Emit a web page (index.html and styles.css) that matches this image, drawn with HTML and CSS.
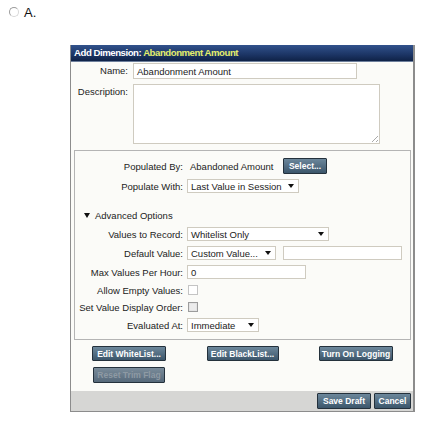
FILE: index.html
```html
<!DOCTYPE html>
<html>
<head>
    <title>Add Dimension</title>
    <link rel="stylesheet" href="styles.css">
</head>
<body>

<label class="choice">
    <span class="radio"></span>
    <span class="choice-text">A.</span>
</label>

<div class="dialog">
    <div class="title-bar">Add Dimension: <span class="title-name">Abandonment Amount</span></div>

    <div class="top-form">
        <div class="top-row">
            <span class="top-label">Name:</span>
            <span class="field name-field">Abandonment Amount</span>
        </div>
        <div class="top-row">
            <span class="top-label">Description:</span>
            <span class="field desc-field"><span class="grip"></span></span>
        </div>
    </div>

    <div class="panel">
        <div class="row row-tall">
            <span class="label">Populated By:</span>
            <span class="value">Abandoned Amount</span>
            <span class="btn btn-select">Select...</span>
        </div>
        <div class="row">
            <span class="label">Populate With:</span>
            <span class="select sel-populate">Last Value in Session <i class="caret"></i></span>
        </div>
        <div class="row advanced">
            <i class="caret caret-dark"></i>
            <span>Advanced Options</span>
        </div>
        <div class="row">
            <span class="label">Values to Record:</span>
            <span class="select sel-record">Whitelist Only <i class="caret"></i></span>
        </div>
        <div class="row">
            <span class="label">Default Value:</span>
            <span class="select sel-default">Custom Value... <i class="caret"></i></span>
            <span class="field custom-field"></span>
        </div>
        <div class="row">
            <span class="label">Max Values Per Hour:</span>
            <span class="field max-field">0</span>
        </div>
        <div class="row row-short">
            <span class="label">Allow Empty Values:</span>
            <span class="checkbox"></span>
        </div>
        <div class="row row-short">
            <span class="label">Set Value Display Order:</span>
            <span class="checkbox checkbox-dim"></span>
        </div>
        <div class="row">
            <span class="label">Evaluated At:</span>
            <span class="select sel-eval">Immediate <i class="caret"></i></span>
        </div>
    </div>

    <div class="actions">
        <span class="btn btn-wide">Edit WhiteList...</span>
        <span class="btn btn-mid">Edit BlackList...</span>
        <span class="btn btn-wide">Turn On Logging</span>
    </div>
    <div class="actions actions-left">
        <span class="btn btn-mid btn-disabled">Reset Trim Flag</span>
    </div>

    <div class="footer">
        <span class="btn btn-save">Save Draft</span>
        <span class="btn btn-cancel">Cancel</span>
    </div>
</div>

</body>
</html>
```

FILE: styles.css
```css
:root {
    --text-color: #222;
    --field-border: #cfcbc0;
    --panel-border: #b4b4b4;
    --btn-top: #6c879b;
    --btn-bottom: #3c566b;
    --btn-border: #24313c;
}

body {
    margin: 0;
    background: #fff;
    color: var(--text-color);
    font-family: "Liberation Sans", Arial, sans-serif;
    font-size: 9.5px;
}

.choice {
    display: flex;
    align-items: center;
    gap: 5px;
    height: 10px;
    padding: 7px 0 0 9px;
}

.radio {
    width: 8px;
    height: 8px;
    border: 1px solid #9c9c9c;
    border-right-color: #d8d8d8;
    border-bottom-color: #d8d8d8;
    border-radius: 50%;
}

.choice-text {
    font-size: 13px;
    color: #111;
}

.dialog {
    width: 342px;
    margin: 28px 0 0 70px;
    border: 1px solid #8c8c8c;
    border-right-width: 2px;
    border-top: none;
    background: #fbfbf8;
}

.title-bar {
    height: 16px;
    line-height: 16px;
    padding-left: 3px;
    background: linear-gradient(#31528c, #1c3565 60%, #0f2247);
    border-bottom: 1px solid #6d7f9c;
    color: #fff;
    font-size: 9.6px;
    font-weight: bold;
    letter-spacing: -0.45px;
}

.title-name {
    color: #e4ee6c;
}

.top-form {
    display: flex;
    flex-direction: column;
    gap: 5px;
    padding-top: 1px;
}

.top-row {
    display: flex;
    gap: 5px;
}

.top-label {
    width: 57px;
    text-align: right;
    line-height: 16px;
}

.field {
    box-sizing: border-box;
    display: flex;
    align-items: center;
    height: 14px;
    padding: 0 3px;
    background: #fff;
    border: 1px solid var(--field-border);
}

.name-field {
    width: 224px;
    height: 16px;
}

.desc-field {
    position: relative;
    width: 247px;
    height: 60px;
}

.grip {
    position: absolute;
    right: 1px;
    bottom: 1px;
    width: 6px;
    height: 6px;
    background: linear-gradient(135deg, transparent 45%, #aaa 45%, #aaa 55%, transparent 55%, transparent 75%, #aaa 75%, #aaa 85%, transparent 85%);
}

.panel {
    display: flex;
    flex-direction: column;
    gap: 5px;
    margin: 6px 2px 0 3px;
    padding: 7px 0 7px;
    border: 1px solid var(--panel-border);
}

.row {
    display: flex;
    align-items: center;
    gap: 4px;
    height: 14px;
}

.row-tall {
    height: 16px;
}

.row-short {
    height: 12px;
}

.label {
    width: 108px;
    text-align: right;
}

.value {
    margin-left: 3px;
    width: 89px;
}

.select {
    box-sizing: border-box;
    display: flex;
    align-items: center;
    justify-content: space-between;
    height: 14px;
    padding: 0 4px 0 3px;
    background: #fff;
    border: 1px solid var(--field-border);
}

.caret {
    width: 0;
    height: 0;
    border-left: 3px solid transparent;
    border-right: 3px solid transparent;
    border-top: 4px solid #111;
}

.sel-populate { width: 112px; }
.sel-record { width: 142px; }
.sel-default { width: 89px; }
.sel-eval { width: 72px; }

.custom-field {
    width: 119px;
    margin-left: 3px;
}

.max-field {
    width: 119px;
}

.advanced {
    gap: 5px;
    margin-top: 10px;
    padding-left: 9px;
}

.caret-dark {
    border-top-width: 5px;
    border-left-width: 3px;
    border-right-width: 3px;
}

.checkbox {
    box-sizing: border-box;
    width: 10px;
    height: 10px;
    margin-left: 1px;
    background: #fff;
    border: 1px solid #c4c4c4;
}

.checkbox-dim {
    border-color: #9c9c9c;
    box-shadow: inset 0 0 0 1px #e4e4e4;
    background: #ececec;
}

.btn {
    box-sizing: border-box;
    display: flex;
    align-items: center;
    justify-content: center;
    height: 15px;
    background: linear-gradient(var(--btn-top), var(--btn-bottom));
    border: 1px solid var(--btn-border);
    border-radius: 1px;
    color: #fff;
    font-size: 8.5px;
    font-weight: bold;
    white-space: nowrap;
}

.btn-select {
    width: 44px;
    height: 16px;
}

.actions {
    display: flex;
    justify-content: space-between;
    margin-top: 6px;
    padding: 0 20px 0 21px;
}

.actions-left {
    justify-content: flex-start;
    padding-left: 22px;
}

.btn-wide { width: 74px; }
.btn-mid { width: 72px; }

.btn-disabled {
    height: 16px;
    color: #8e9aa4;
    background: linear-gradient(#7a8c9a, #56697a);
}

.footer {
    display: flex;
    justify-content: flex-end;
    gap: 3px;
    margin-top: 8px;
    padding: 2px 2px 2px;
    background: #d6d6d4;
}

.btn-save {
    width: 54px;
    height: 16px;
}

.btn-cancel {
    width: 37px;
    height: 16px;
}
```
